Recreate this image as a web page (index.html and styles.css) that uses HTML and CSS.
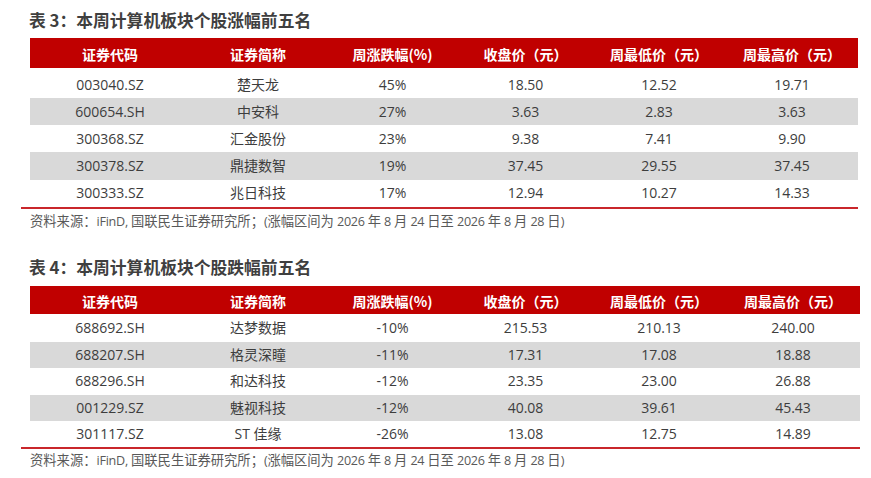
FILE: index.html
```html
<!DOCTYPE html>
<html lang="zh-CN">
<head>
<meta charset="utf-8">
<title>本周计算机板块个股涨跌幅前五名</title>
<link rel="stylesheet" href="styles.css">
</head>
<body>
<section class="block block-up">
  <h2 class="title">表 3：本周计算机板块个股涨幅前五名</h2>
  <table class="data data-up">
    <colgroup>
      <col class="c1"><col class="c2"><col class="c3"><col class="c4"><col class="c5"><col class="c6">
    </colgroup>
    <thead>
      <tr><th>证券代码</th><th>证券简称</th><th>周涨跌幅(%)</th><th>收盘价（元）</th><th>周最低价（元）</th><th>周最高价（元）</th></tr>
    </thead>
    <tbody>
      <tr><td>003040.SZ</td><td>楚天龙</td><td>45%</td><td>18.50</td><td>12.52</td><td>19.71</td></tr>
      <tr class="alt"><td>600654.SH</td><td>中安科</td><td>27%</td><td>3.63</td><td>2.83</td><td>3.63</td></tr>
      <tr><td>300368.SZ</td><td>汇金股份</td><td>23%</td><td>9.38</td><td>7.41</td><td>9.90</td></tr>
      <tr class="alt"><td>300378.SZ</td><td>鼎捷数智</td><td>19%</td><td>37.45</td><td>29.55</td><td>37.45</td></tr>
      <tr><td>300333.SZ</td><td>兆日科技</td><td>17%</td><td>12.94</td><td>10.27</td><td>14.33</td></tr>
    </tbody>
  </table>
  <div class="rule rule-up"></div>
  <p class="note">资料来源：<span class="lat">iFinD, </span>国联民生证券研究所；<span class="lat">(</span>涨幅区间为<span class="lat"> 2026 </span>年<span class="lat"> 8 </span>月<span class="lat"> 24 </span>日至<span class="lat"> 2026 </span>年<span class="lat"> 8 </span>月<span class="lat"> 28 </span>日<span class="lat">)</span></p>
</section>
<section class="block block-down">
  <h2 class="title">表 4：本周计算机板块个股跌幅前五名</h2>
  <table class="data data-down">
    <colgroup>
      <col class="c1"><col class="c2"><col class="c3"><col class="c4"><col class="c5"><col class="c6w">
    </colgroup>
    <thead>
      <tr><th>证券代码</th><th>证券简称</th><th>周涨跌幅(%)</th><th>收盘价（元）</th><th>周最低价（元）</th><th>周最高价（元）</th></tr>
    </thead>
    <tbody>
      <tr><td>688692.SH</td><td>达梦数据</td><td>-10%</td><td>215.53</td><td>210.13</td><td>240.00</td></tr>
      <tr class="alt"><td>688207.SH</td><td>格灵深瞳</td><td>-11%</td><td>17.31</td><td>17.08</td><td>18.88</td></tr>
      <tr><td>688296.SH</td><td>和达科技</td><td>-12%</td><td>23.35</td><td>23.00</td><td>26.88</td></tr>
      <tr class="alt"><td>001229.SZ</td><td>魅视科技</td><td>-12%</td><td>40.08</td><td>39.61</td><td>45.43</td></tr>
      <tr><td>301117.SZ</td><td>ST 佳缘</td><td>-26%</td><td>13.08</td><td>12.75</td><td>14.89</td></tr>
    </tbody>
  </table>
  <div class="rule rule-down"></div>
  <p class="note">资料来源：<span class="lat">iFinD, </span>国联民生证券研究所；<span class="lat">(</span>涨幅区间为<span class="lat"> 2026 </span>年<span class="lat"> 8 </span>月<span class="lat"> 24 </span>日至<span class="lat"> 2026 </span>年<span class="lat"> 8 </span>月<span class="lat"> 28 </span>日<span class="lat">)</span></p>
</section>
</body>
</html>
```
FILE: styles.css
```css
html, body {
  margin: 0;
  padding: 0;
  background: #ffffff;
}

body {
  font-family: "Open Sans", "Noto Sans CJK SC", sans-serif;
  color: #3d3d3d;
  padding-top: 9px;
}

.block {
  padding-left: 30px;
}

.block-down {
  margin-top: 26px;
}

.title {
  margin: 0 0 7px -1px;
  height: 22px;
  line-height: 22px;
  font-family: "Noto Sans CJK SC", sans-serif;
  font-size: 16.8px;
  font-weight: bold;
  color: #3f3f3f;
}

.block-down .title {
  margin-bottom: 8px;
}

.data {
  border-collapse: collapse;
  table-layout: fixed;
}

.data-up { width: 828px; }
.data-down { width: 830px; }

.c1 { width: 160px; }
.c2 { width: 136px; }
.c3 { width: 133px; }
.c4 { width: 133px; }
.c5 { width: 134px; }
.c6 { width: 132px; }
.c6w { width: 134px; }

.data th {
  background: #c00000;
  color: #ffffff;
  font-family: "Noto Sans CJK SC", sans-serif;
  font-weight: bold;
  font-size: 14px;
  padding: 2px 0 0 0;
  text-align: center;
  line-height: 18px;
}

.data-up th { height: 28px; }
.data-down th { height: 26.7px; }

.data td {
  padding: 0;
  text-align: center;
  font-size: 14px;
  line-height: 18px;
  color: #3d3d3d;
}

.data-up td { height: 27.2px; }
.data-up tbody tr:first-child td { height: 27px; padding-top: 3px; }

.data-down td { height: 26.4px; }
.data-down tbody tr:first-child td { height: 27.3px; }

.data tr.alt td {
  background: #d9d9d9;
}

.rule {
  height: 2px;
  background: #c9262b;
  margin-left: -9px;
}

.rule-up { width: 837px; }
.rule-down { width: 839px; }

.note {
  margin: 4px 0 0 0;
  font-family: "Noto Sans CJK SC", sans-serif;
  font-size: 13.3px;
  line-height: 16px;
  color: #595959;
}

.note .lat {
  font-family: "Open Sans", sans-serif;
  font-size: 12.6px;
  letter-spacing: -0.25px;
}

.block-down .note {
  margin-top: 3px;
}
```
